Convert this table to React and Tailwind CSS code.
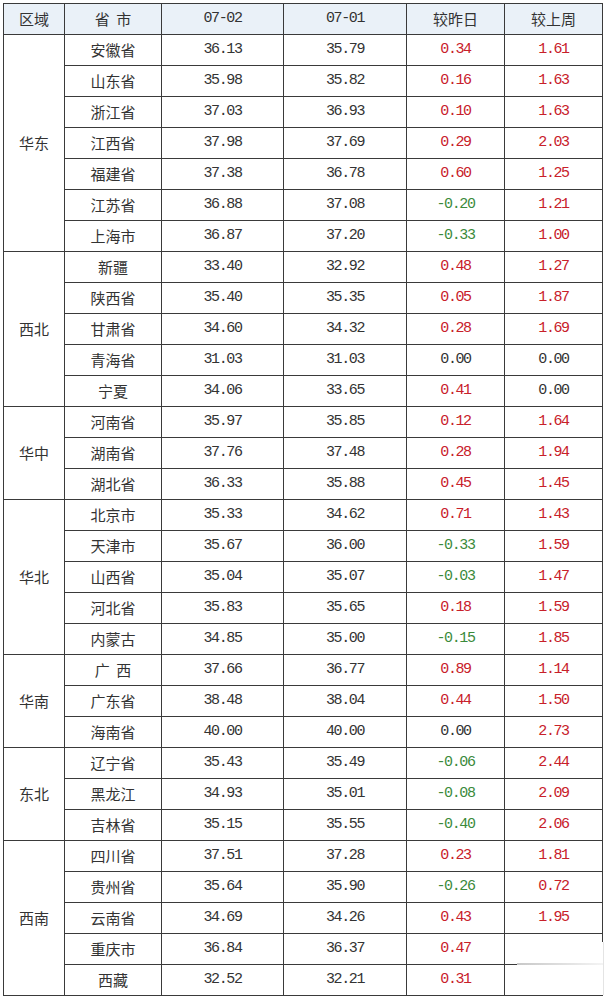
import React from "react";

const regions = [
  {
    name: "华东",
    rows: [
      ["安徽省", "36.13", "35.79", "0.34", "1.61"],
      ["山东省", "35.98", "35.82", "0.16", "1.63"],
      ["浙江省", "37.03", "36.93", "0.10", "1.63"],
      ["江西省", "37.98", "37.69", "0.29", "2.03"],
      ["福建省", "37.38", "36.78", "0.60", "1.25"],
      ["江苏省", "36.88", "37.08", "-0.20", "1.21"],
      ["上海市", "36.87", "37.20", "-0.33", "1.00"],
    ],
  },
  {
    name: "西北",
    rows: [
      ["新疆", "33.40", "32.92", "0.48", "1.27"],
      ["陕西省", "35.40", "35.35", "0.05", "1.87"],
      ["甘肃省", "34.60", "34.32", "0.28", "1.69"],
      ["青海省", "31.03", "31.03", "0.00", "0.00"],
      ["宁夏", "34.06", "33.65", "0.41", "0.00"],
    ],
  },
  {
    name: "华中",
    rows: [
      ["河南省", "35.97", "35.85", "0.12", "1.64"],
      ["湖南省", "37.76", "37.48", "0.28", "1.94"],
      ["湖北省", "36.33", "35.88", "0.45", "1.45"],
    ],
  },
  {
    name: "华北",
    rows: [
      ["北京市", "35.33", "34.62", "0.71", "1.43"],
      ["天津市", "35.67", "36.00", "-0.33", "1.59"],
      ["山西省", "35.04", "35.07", "-0.03", "1.47"],
      ["河北省", "35.83", "35.65", "0.18", "1.59"],
      ["内蒙古", "34.85", "35.00", "-0.15", "1.85"],
    ],
  },
  {
    name: "华南",
    rows: [
      ["广  西", "37.66", "36.77", "0.89", "1.14"],
      ["广东省", "38.48", "38.04", "0.44", "1.50"],
      ["海南省", "40.00", "40.00", "0.00", "2.73"],
    ],
  },
  {
    name: "东北",
    rows: [
      ["辽宁省", "35.43", "35.49", "-0.06", "2.44"],
      ["黑龙江", "34.93", "35.01", "-0.08", "2.09"],
      ["吉林省", "35.15", "35.55", "-0.40", "2.06"],
    ],
  },
  {
    name: "西南",
    rows: [
      ["四川省", "37.51", "37.28", "0.23", "1.81"],
      ["贵州省", "35.64", "35.90", "-0.26", "0.72"],
      ["云南省", "34.69", "34.26", "0.43", "1.95"],
      ["重庆市", "36.84", "36.37", "0.47", ""],
      ["西藏", "32.52", "32.21", "0.31", ""],
    ],
  },
];

const cjk = "font-['Noto_Sans_CJK_SC',sans-serif] text-[15px] text-[#333]";
const num = "font-['Liberation_Mono',monospace] text-[15px] tracking-[-1.4px]";
const cell = "border border-[#3a3a3a] text-center p-0 h-[31px]";

const tone = (v) => {
  if (v.startsWith("-")) return "text-[#3b8a3b]";
  if (v === "0.00") return "text-[#333]";
  return "text-[#c8202a]";
};

export default function App() {
  return (
    <div className="bg-white w-[608px] h-[999px] pt-[3px] pl-[3px]">
      <div className="relative w-[599px]">
        <table className="border-collapse table-fixed w-[599px]">
          <colgroup>
            <col className="w-[61px]" />
            <col className="w-[97px]" />
            <col className="w-[122px]" />
            <col className="w-[123px]" />
            <col className="w-[98px]" />
            <col className="w-[98px]" />
          </colgroup>
          <thead>
            <tr className="bg-[#eaf1f8]">
              <th className={`${cell} ${cjk} font-normal`}>区域</th>
              <th className={`${cell} ${cjk} font-normal whitespace-pre`}>省  市</th>
              <th className={`${cell} ${num} font-normal text-[#333]`}>07-02</th>
              <th className={`${cell} ${num} font-normal text-[#333]`}>07-01</th>
              <th className={`${cell} ${cjk} font-normal`}>较昨日</th>
              <th className={`${cell} ${cjk} font-normal`}>较上周</th>
            </tr>
          </thead>
          <tbody>
            {regions.map((g) =>
              g.rows.map((r, i) => (
                <tr key={g.name + r[0]}>
                  {i === 0 && (
                    <td rowSpan={g.rows.length} className={`${cell} ${cjk}`}>
                      {g.name}
                    </td>
                  )}
                  <td className={`${cell} ${cjk} whitespace-pre`}>{r[0]}</td>
                  <td className={`${cell} ${num} text-[#333]`}>{r[1]}</td>
                  <td className={`${cell} ${num} text-[#333]`}>{r[2]}</td>
                  <td className={`${cell} ${num} ${tone(r[3])}`}>{r[3]}</td>
                  <td className={`${cell} ${num} ${tone(r[4])}`}>{r[4]}</td>
                </tr>
              ))
            )}
          </tbody>
        </table>
        {/* white patch over the bottom-right corner, as in the source image */}
        <div className="absolute right-[-2px] bottom-[1px] w-[87px] h-[53px] bg-white border-r border-[#e4e4e4]">
          <div className="mt-[21px] h-[2px] bg-gradient-to-r from-[#c8c8c8] to-[#f4f4f4]" />
        </div>
      </div>
    </div>
  );
}
